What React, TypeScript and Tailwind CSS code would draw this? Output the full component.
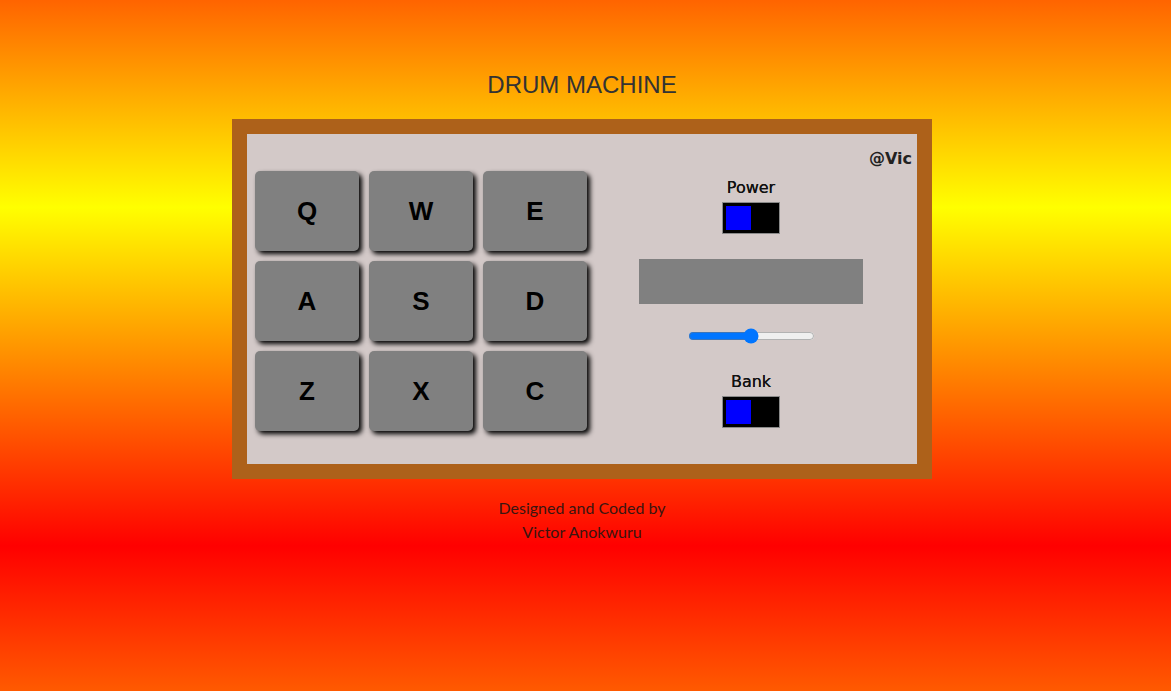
import React, { useState } from "react";

const keys = ["Q", "W", "E", "A", "S", "D", "Z", "X", "C"];

function Toggle() {
  return (
    <div className="w-[58px] h-[32px] border border-[#8a8a8a] bg-black p-[3px]">
      <div className="w-[25px] h-[24px] bg-[#0000ff]" />
    </div>
  );
}

export default function App() {
  const [volume, setVolume] = useState(0.5);

  return (
    <div className="w-full h-[691px] overflow-hidden bg-[linear-gradient(#ff6400_0%,#ffff00_30%,#ff0000_79%,#ff5a00_100%)]">
      <div className="flex flex-col items-center pt-[71px] pr-[7px]">
        <h1 className="text-[24px] leading-[28px] text-[#333] font-['Liberation_Sans',Arial,sans-serif] mb-[20px]">
          DRUM MACHINE
        </h1>

        <div id="drum-machine" className="w-[700px] h-[360px] border-[15px] border-[#ad611a] bg-[#d3c9c8] flex">
          <div className="pl-[8px] pt-[37px] grid grid-cols-[104px_104px_104px] auto-rows-[80px] gap-[10px] self-start">
            {keys.map((k) => (
              <button
                key={k}
                className="rounded-[5px] bg-[#808080] shadow-[3px_3px_5px_#000] flex items-center justify-center text-[26px] font-bold text-black font-['Liberation_Sans',Arial,sans-serif]"
              >
                {k}
              </button>
            ))}
          </div>

          <div className="flex-1 flex flex-col items-center pr-[2px] font-['DejaVu_Sans',Verdana,sans-serif]">
            <div className="self-stretch text-right pr-[3px] pt-[15px] text-[16px] leading-[19px] font-bold text-[#222]">
              @Vic
            </div>
            <p className="mt-[10px] text-[16px] leading-[19px] text-[#111] [text-shadow:0_0_0.4px_#111]">Power</p>
            <div className="mt-[5px]">
              <Toggle />
            </div>
            <div id="display" className="mt-[25px] w-[224px] h-[45px] bg-[#808080]" />
            <input
              type="range"
              min={0}
              max={1}
              step={0.01}
              value={volume}
              onChange={(e) => setVolume(Number(e.target.value))}
              className="mt-[24px] w-[127px] h-[16px]"
            />
            <p className="mt-[28px] text-[16px] leading-[19px] text-[#111] [text-shadow:0_0_0.4px_#111]">Bank</p>
            <div className="mt-[5px]">
              <Toggle />
            </div>
          </div>
        </div>

        <div className="mt-[17px] text-center text-[16px] leading-[24px] text-[#3a1510] font-['Lato',sans-serif]">
          <p>Designed and Coded by</p>
          <p>Victor Anokwuru</p>
        </div>
      </div>
    </div>
  );
}
